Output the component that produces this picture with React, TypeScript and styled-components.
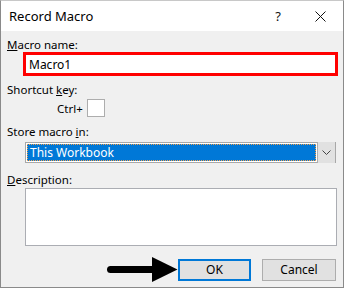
import React from "react";
import styled, { createGlobalStyle } from "styled-components";

const GlobalStyle = createGlobalStyle`
  html, body {
    margin: 0;
    padding: 0;
    background: #f0f0f0;
  }
  body {
    font-family: "Segoe UI", "Noto Sans", sans-serif;
    font-size: 11.5px;
    color: #000;
  }
`;

const Window = styled.div`
  width: 344px;
  height: 288px;
  box-sizing: border-box;
  border: 1px solid #8a8a8a;
  border-top-color: #c8c8c8;
  background: #f0f0f0;
  display: flex;
  flex-direction: column;
`;

const TitleBar = styled.div`
  height: 30px;
  background: #fff;
  display: flex;
  align-items: center;
  padding-left: 8px;
  font-size: 13px;
`;

const Title = styled.div`
  flex: 1;
`;

const TitleButton = styled.div<{ $w: number }>`
  width: ${(p) => p.$w}px;
  height: 30px;
  display: flex;
  align-items: center;
  justify-content: center;
  color: #111;
`;

const Body = styled.div`
  display: flex;
  flex-direction: column;
  padding: 0 6px 0 6px;
`;

const Label = styled.div<{ $top: number }>`
  line-height: 14px;
  height: 14px;
  margin-top: ${(p) => p.$top}px;
  white-space: nowrap;
`;

const NameInput = styled.div`
  margin-left: 16px;
  width: 315px;
  height: 24px;
  box-sizing: border-box;
  border: 3px solid #ff0000;
  background: #fff;
  display: flex;
  align-items: center;
  padding-left: 3px;
  font-size: 12px;
`;

const CtrlRow = styled.div`
  display: flex;
  align-items: center;
  gap: 4px;
  margin: 2px 0 0 50px;
`;

const KeyBox = styled.div`
  width: 18px;
  height: 18px;
  box-sizing: border-box;
  border: 1px solid #adadad;
  background: #fff;
`;

const Select = styled.div`
  margin: 3px 0 0 18px;
  width: 311px;
  height: 21px;
  box-sizing: border-box;
  border: 1px solid #a8a8a8;
  background: #fff;
  display: flex;
  padding: 1px 0 1px 1px;
`;

const Selected = styled.div`
  flex: 1;
  background: #0078d7;
  color: #fff;
  border: 1px dotted #f5a04a;
  display: flex;
  align-items: center;
  padding-left: 2px;
  margin-right: 1px;
  font-size: 12px;
`;

const DropButton = styled.div`
  width: 17px;
  margin: -2px 0 -2px 0;
  background: #e1e1e1;
  border-left: 1px solid #adadad;
  display: flex;
  align-items: center;
  justify-content: center;
`;

const TextArea = styled.div`
  margin: 1px 0 0 18px;
  width: 312px;
  height: 58px;
  box-sizing: border-box;
  border: 1px solid #abadb3;
  background: #fff;
`;

const ButtonRow = styled.div`
  display: flex;
  align-items: center;
  justify-content: flex-end;
  margin: 11px 1px 0 0;
`;

const Button = styled.div<{ $primary?: boolean }>`
  width: ${(p) => (p.$primary ? 73 : 74)}px;
  height: 22px;
  box-sizing: border-box;
  border: ${(p) => (p.$primary ? "2px solid #0078d7" : "1px solid #adadad")};
  background: #e1e1e1;
  display: flex;
  align-items: center;
  justify-content: center;
  margin-left: ${(p) => (p.$primary ? 0 : 11)}px;
  font-size: 12px;
`;

export default function App() {
  return (
    <>
      <GlobalStyle />
      <Window>
        <TitleBar>
          <Title>Record Macro</Title>
          <TitleButton $w={30} style={{ paddingLeft: 3 }}>?</TitleButton>
          <TitleButton $w={46} style={{ marginLeft: 4 }}>
            <svg width="11" height="11" viewBox="0 0 11 11">
              <path d="M0.5 0.5 L10.5 10.5 M10.5 0.5 L0.5 10.5" stroke="#111" strokeWidth="1" />
            </svg>
          </TitleButton>
        </TitleBar>
        <Body>
          <Label $top={7}>
            <u>M</u>acro name:
          </Label>
          <NameInput>Macro1</NameInput>
          <Label $top={7}>
            Shortcut <u>k</u>ey:
          </Label>
          <CtrlRow>
            <span>Ctrl+</span>
            <KeyBox />
          </CtrlRow>
          <Label $top={8}>
            Store macro <u>i</u>n:
          </Label>
          <Select>
            <Selected>This Workbook</Selected>
            <DropButton>
              <svg width="9" height="6" viewBox="0 0 9 6">
                <path d="M0.5 0.5 L4.5 4.5 L8.5 0.5" fill="none" stroke="#444" strokeWidth="1" />
              </svg>
            </DropButton>
          </Select>
          <Label $top={10}>
            <u>D</u>escription:
          </Label>
          <TextArea />
          <ButtonRow>
            <svg width="73" height="25" viewBox="0 0 73 25">
              <path d="M5.5 12.5 L50 12.5" stroke="#000" strokeWidth="7" strokeLinecap="round" />
              <polygon points="47,0 72.5,12.5 47,25" fill="#000" />
            </svg>
            <Button $primary>OK</Button>
            <Button>Cancel</Button>
          </ButtonRow>
        </Body>
      </Window>
    </>
  );
}
